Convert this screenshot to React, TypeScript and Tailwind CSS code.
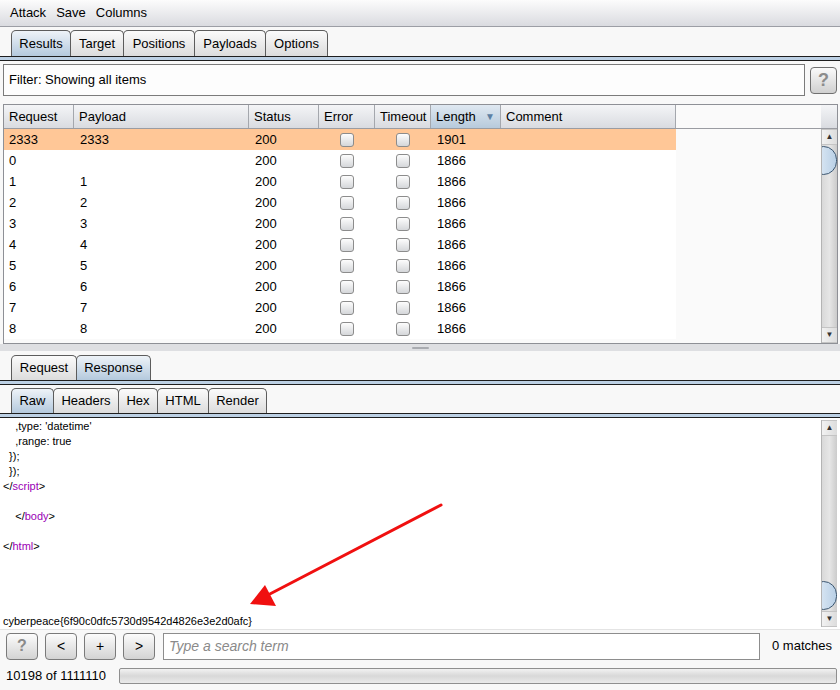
import React from 'react';

const FONT = { fontFamily: "'Liberation Sans', Arial, sans-serif" };

function Tab({ label, active, w }: { label: string; active?: boolean; w: string }) {
  return (
    <div
      className={`${w} h-full -mr-px flex items-center justify-center rounded-t-[5px] border border-b-0 border-[#5c5c5c] text-[13px] text-black ${
        active
          ? 'bg-gradient-to-b from-[#eef3f8] to-[#b4c9dd]'
          : 'bg-gradient-to-b from-[#fbfbfb] to-[#dcdcdc]'
      }`}
    >
      {label}
    </div>
  );
}

function Strip() {
  return <div className="h-[5px] w-full border-y border-[#1e1e1e] bg-[#bcd0e4] shrink-0" />;
}

function ArrowBtn({ up }: { up?: boolean }) {
  return (
    <div className="h-[16px] w-full shrink-0 flex items-center justify-center bg-gradient-to-r from-[#f2f2f2] to-[#dcdcdc] border-y border-[#c4c4c4] text-[8px] text-[#333]">
      {up ? '▲' : '▼'}
    </div>
  );
}

function Thumb() {
  return (
    <div className="w-full h-[29px] shrink-0 overflow-hidden">
      <div className="ml-[-12px] w-[27px] h-[29px] rounded-full border border-[#3b5670] bg-gradient-to-r from-[#eaf2fa] to-[#b9d0e6]" />
    </div>
  );
}

function ScrollBar({ thumbAtEnd }: { thumbAtEnd?: boolean }) {
  return (
    <div className="w-[16px] h-full flex flex-col bg-gradient-to-r from-[#d9d9d9] via-[#e6e6e6] to-[#cbcbcb] border-l border-[#b4b4b4]">
      <ArrowBtn up />
      {thumbAtEnd ? <div className="flex-1" /> : <div className="h-[1px] shrink-0" />}
      <Thumb />
      {thumbAtEnd ? <div className="h-[1px] shrink-0" /> : <div className="flex-1" />}
      <ArrowBtn />
    </div>
  );
}

function Check() {
  return (
    <div className="w-[14px] h-[14px] rounded-[3px] border border-[#8c8c8c] bg-gradient-to-b from-[#fdfdfd] to-[#d5d7da]" />
  );
}

const COLS = [
  { name: 'Request', w: 'w-[70px]' },
  { name: 'Payload', w: 'w-[175px]' },
  { name: 'Status', w: 'w-[70px]' },
  { name: 'Error', w: 'w-[56px]' },
  { name: 'Timeout', w: 'w-[56px]' },
  { name: 'Length', w: 'w-[70px]' },
  { name: 'Comment', w: 'w-[175px]' },
];

const ROWS = [
  ['2333', '2333', '1901'],
  ['0', '', '1866'],
  ['1', '1', '1866'],
  ['2', '2', '1866'],
  ['3', '3', '1866'],
  ['4', '4', '1866'],
  ['5', '5', '1866'],
  ['6', '6', '1866'],
  ['7', '7', '1866'],
  ['8', '8', '1866'],
];

function Tag({ name }: { name: string }) {
  return (
    <>
      &lt;/<span className="text-[#9a00b5]">{name}</span>&gt;
    </>
  );
}

function SmallBtn({ label, grey }: { label: string; grey?: boolean }) {
  return (
    <div
      className={`w-[32px] h-[27px] rounded-[4px] border border-[#7a7a7a] bg-gradient-to-b from-[#fcfcfc] to-[#d3d3d3] flex items-center justify-center text-[14px] ${
        grey ? 'font-bold text-[#8a8a8a] text-[16px]' : 'text-black'
      }`}
    >
      {label}
    </div>
  );
}

export default function App() {
  return (
    <div className="w-[840px] h-[690px] flex flex-col bg-[#f8f8f8] overflow-hidden text-black" style={FONT}>
      {/* Menu bar */}
      <div className="h-[27px] shrink-0 flex items-center gap-[10px] px-[10px] text-[13px] bg-gradient-to-b from-[#fcfcfc] to-[#dadbe0] border-b border-[#9c9ea5]">
        <span>Attack</span>
        <span>Save</span>
        <span>Columns</span>
      </div>

      {/* Main tabs */}
      <div className="h-[26px] mt-[3px] shrink-0 flex pl-[11px]">
        <Tab label="Results" active w="w-[60px]" />
        <Tab label="Target" w="w-[54px]" />
        <Tab label="Positions" w="w-[72px]" />
        <Tab label="Payloads" w="w-[72px]" />
        <Tab label="Options" w="w-[63px]" />
      </div>
      <Strip />

      {/* Filter */}
      <div className="h-[32px] mt-[3px] shrink-0 flex items-center">
        <div className="ml-[3px] w-[802px] h-full border border-[#7b7b7b] bg-[#fdfdfd] flex items-center px-[5px] text-[13px]">
          Filter: Showing all items
        </div>
        <div className="ml-[5px] w-[27px] h-[27px] rounded-[4px] border border-[#707070] bg-gradient-to-b from-[#fafafa] to-[#d0d0d0] flex items-center justify-center text-[18px] font-bold text-[#8c8c8c]">
          ?
        </div>
      </div>

      {/* Results table */}
      <div className="ml-[3px] mt-[8px] w-[835px] h-[240px] shrink-0 border border-[#8e9096] flex bg-[#fafafa]">
        <div className="w-[817px] h-full flex flex-col">
          <div className="h-[24px] shrink-0 flex border-b border-[#9a9ca2]">
            {COLS.map((c) => (
              <div
                key={c.name}
                className={`${c.w} h-full flex items-center justify-between px-[5px] border-r border-[#a4a7ad] text-[13px] ${
                  c.name === 'Length'
                    ? 'bg-gradient-to-b from-[#dfe8f1] to-[#b7cadc]'
                    : 'bg-gradient-to-b from-[#f4f5f7] to-[#d9dbe0]'
                }`}
              >
                <span>{c.name}</span>
                {c.name === 'Length' && <span className="text-[10px] text-[#5d7fa3]">▼</span>}
              </div>
            ))}
          </div>
          {ROWS.map((r, i) => (
            <div
              key={i}
              className={`h-[21px] w-[672px] shrink-0 flex items-center pt-[1px] text-[13px] ${i === 0 ? 'bg-[#ffc797]' : 'bg-white'}`}
            >
              <div className="w-[70px] px-[5px]">{r[0]}</div>
              <div className="w-[175px] px-[6px]">{r[1]}</div>
              <div className="w-[70px] px-[6px]">200</div>
              <div className="w-[56px] flex justify-center">
                <Check />
              </div>
              <div className="w-[56px] flex justify-center">
                <Check />
              </div>
              <div className="w-[70px] px-[6px]">{r[2]}</div>
              <div className="w-[175px]" />
            </div>
          ))}
        </div>
        <div className="w-[16px] h-full flex flex-col">
          <div className="h-[24px] shrink-0 bg-gradient-to-b from-[#f4f5f7] to-[#d9dbe0] border-b border-[#9a9ca2]" />
          <div className="flex-1 min-h-0">
            <ScrollBar />
          </div>
        </div>
      </div>

      {/* Splitter */}
      <div className="h-[7px] shrink-0 bg-[#dedfe2] flex justify-center pt-[3px]">
        <div className="w-[17px] h-[2px] rounded-full bg-[#a9abb0]" />
      </div>

      {/* Request / Response tabs */}
      <div className="h-[25px] mt-[4px] shrink-0 flex pl-[11px]">
        <Tab label="Request" w="w-[66px]" />
        <Tab label="Response" active w="w-[75px]" />
      </div>
      <Strip />

      {/* Raw tabs */}
      <div className="h-[25px] mt-[3px] shrink-0 flex pl-[11px]">
        <Tab label="Raw" active w="w-[43px]" />
        <Tab label="Headers" w="w-[66px]" />
        <Tab label="Hex" w="w-[40px]" />
        <Tab label="HTML" w="w-[52px]" />
        <Tab label="Render" w="w-[59px]" />
      </div>
      <Strip />

      {/* Response body */}
      <div className="h-[211px] shrink-0 flex bg-white">
        <div className="relative w-[821px] h-full pl-[3px] pt-[1px] text-[11px] leading-[15px] text-black whitespace-pre">
          <div>{'    ,type: \'datetime\''}</div>
          <div>{'    ,range: true'}</div>
          <div>{'  });'}</div>
          <div>{'  });'}</div>
          <div>
            <Tag name="script" />
          </div>
          <div>{' '}</div>
          <div>
            {'    '}
            <Tag name="body" />
          </div>
          <div>{' '}</div>
          <div>
            <Tag name="html" />
          </div>
          <div>{' '}</div>
          <div>{' '}</div>
          <div>{' '}</div>
          <div>{' '}</div>
          <div>cyberpeace{'{'}6f90c0dfc5730d9542d4826e3e2d0afc{'}'}</div>
          <svg className="absolute left-0 top-0" width="821" height="211" viewBox="0 0 821 211">
            <line x1="441" y1="87" x2="266" y2="178" stroke="#f01010" strokeWidth="3" strokeLinecap="round" />
            <polygon points="250,186 265,167 276,188" fill="#f01010" />
          </svg>
        </div>
        <div className="w-[16px] h-full py-[2px]">
          <ScrollBar thumbAtEnd />
        </div>
      </div>

      {/* Search row */}
      <div className="h-[33px] shrink-0 flex items-center pl-[6px] gap-[7px] border-t border-[#e4e4e4]">
        <SmallBtn label="?" grey />
        <SmallBtn label="<" />
        <SmallBtn label="+" />
        <SmallBtn label=">" />
        <div className="ml-[1px] w-[597px] h-[27px] border border-[#8d8d8d] bg-white flex items-center px-[5px] text-[14px] italic text-[#8a8a8a]">
          Type a search term
        </div>
        <span className="ml-[5px] text-[13px]">0 matches</span>
      </div>

      {/* Status */}
      <div className="h-[28px] shrink-0 flex items-center pl-[6px] text-[13px]">
        <span className="w-[113px]">10198 of 1111110</span>
        <div className="w-[718px] h-[16px] border border-[#8f8f8f] rounded-[2px] bg-gradient-to-b from-[#f2f2f2] via-[#d8d8d8] to-[#eaeaea]" />
      </div>
    </div>
  );
}
